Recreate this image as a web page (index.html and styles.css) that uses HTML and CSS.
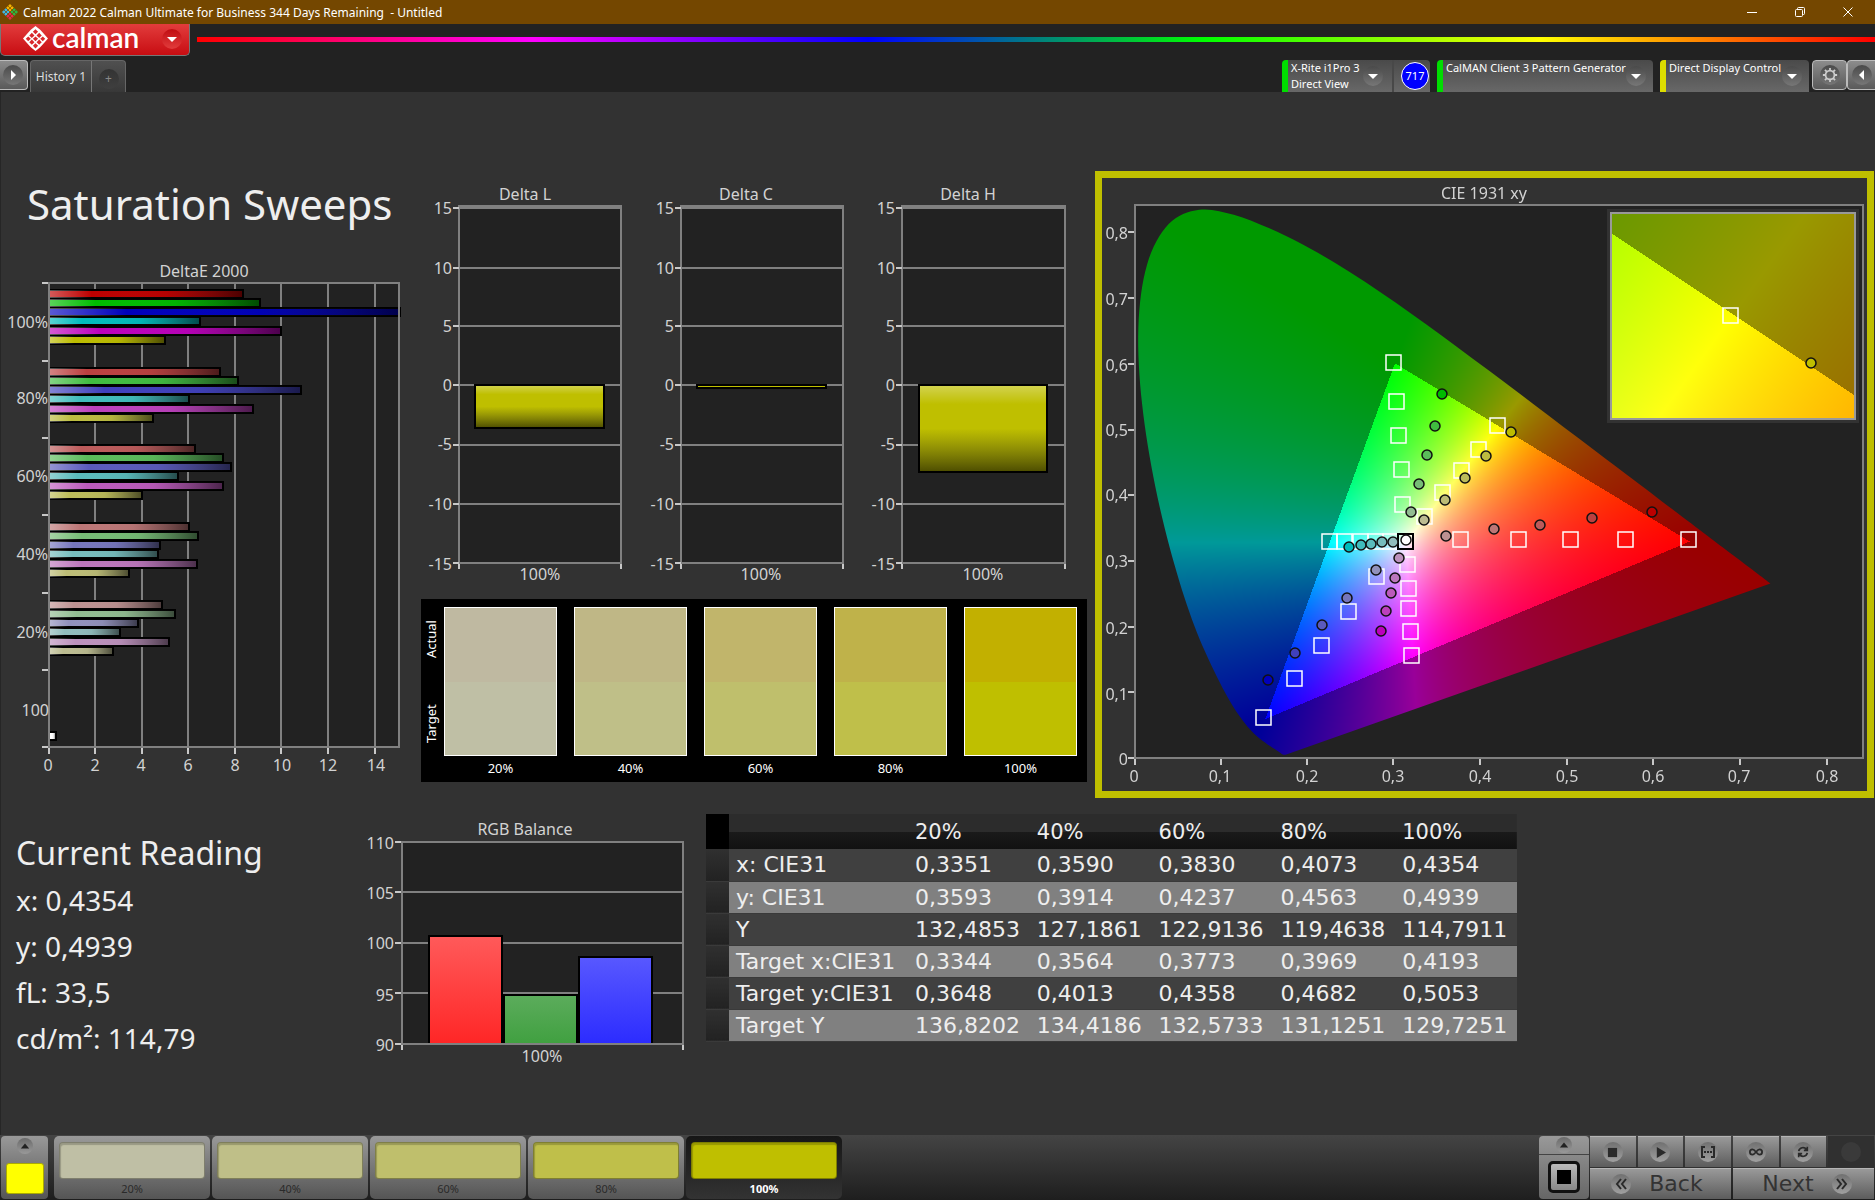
FILE: index.html
```html
<!DOCTYPE html>
<html lang="en">
<head>
<meta charset="utf-8">
<title>Calman 2022 - Untitled</title>
<link rel="stylesheet" href="styles.css">
</head>
<body>
<svg class="defs" width="0" height="0" aria-hidden="true">
  <defs>
    <linearGradient id="shadeX" x1="0" y1="0" x2="1" y2="0">
      <stop offset="0" stop-color="#fff" stop-opacity=".36"/><stop offset=".22" stop-color="#fff" stop-opacity="0"/>
      <stop offset=".6" stop-color="#222" stop-opacity="0.05"/><stop offset="1" stop-color="#000" stop-opacity=".6"/>
    </linearGradient>
    <linearGradient id="shadeY" x1="0" y1="0" x2="0" y2="1">
      <stop offset="0" stop-color="#fff" stop-opacity=".32"/><stop offset=".22" stop-color="#fff" stop-opacity="0"/>
      <stop offset=".5" stop-color="#222" stop-opacity="0"/><stop offset="1" stop-color="#000" stop-opacity=".6"/>
    </linearGradient>
    <linearGradient id="redBar" x1="0" y1="0" x2="0" y2="1"><stop offset="0" stop-color="#ff5a5a"/><stop offset="1" stop-color="#ff2626"/></linearGradient>
    <linearGradient id="greenBar" x1="0" y1="0" x2="0" y2="1"><stop offset="0" stop-color="#5cac5c"/><stop offset="1" stop-color="#40a040"/></linearGradient>
    <linearGradient id="blueBar" x1="0" y1="0" x2="0" y2="1"><stop offset="0" stop-color="#5858ff"/><stop offset="1" stop-color="#2c2cff"/></linearGradient>
  </defs>
</svg>

<header class="titlebar">
  <svg class="app-icon" viewBox="0 0 18 18"><path fill="#f4b400" d="M9 1l4 4-4 4-4-4z"/><path fill="#3fb6e8" d="M5 5l4 4-4 4-4-4z"/><path fill="#2db742" d="M13 5l4 4-4 4-4-4z"/><path fill="#e6284b" d="M9 9l4 4-4 4-4-4z"/><path d="M5 5l8 8M13 5l-8 8M7 3l8 8M3 7l8 8M11 3l-8 8M15 7l-8 8" stroke="#744700" stroke-width=".7"/></svg>
  <span class="titlebar-text">Calman 2022 Calman Ultimate for Business 344 Days Remaining &nbsp;- Untitled</span>
  <div class="window-buttons">
    <button aria-label="Minimize"><svg viewBox="0 0 12 12"><path d="M1 6.5h10"/></svg></button>
    <button aria-label="Restore"><svg viewBox="0 0 12 12"><rect x="1.5" y="3.500" width="7" height="7" rx="1"/><path d="M3.500 3V2.500q0-1 1-1h5q1 0 1 1v5q0 1-1 1H9"/></svg></button>
    <button aria-label="Close"><svg viewBox="0 0 12 12"><path d="M1.500 1.500l9 9M10.500 1.500l-9 9"/></svg></button>
  </div>
</header>

<div class="brand-row">
  <button class="brand">
    <svg class="brand-mark" viewBox="0 0 24 24"><path fill="#fff" d="M12 0l4.500 3.500L20 7.500 24 12l-4 4.500-3.500 4L12 24l-4.500-3.500L4 16.500 0 12l4-4.500 3.500-4z"/><g fill="#d8282c"><path d="M12 3l2.500 2.500L12 8 9.500 5.500z"/><path d="M8.500 6.500L11 9l-2.500 2.500L6 9z"/><path d="M15.500 6.500L18 9l-2.500 2.500L13 9z"/><path d="M5 10l2.500 2.300L5 14.600 2.700 12.300z"/><path d="M12 10l2.500 2.300L12 14.600 9.500 12.300z"/><path d="M19 10l2.300 2.300L19 14.600l-2.500-2.300z"/><path d="M8.500 13l2.500 2.500L8.500 18 6 15.500z"/><path d="M15.500 13l2.500 2.500-2.500 2.500-2.500-2.500z"/><path d="M12 16.500l2.500 2.500-2.500 2.500L9.500 19z"/></g></svg>
    <span class="brand-name">calman</span>
    <span class="round round-red"><svg viewBox="0 0 12 12"><path d="M1 4h10L6 9z"/></svg></span>
  </button>
  <div class="rainbow"></div>
</div>

<div class="tab-row">
  <button class="square-btn square-first" aria-label="Expand"><span class="round"><svg viewBox="0 0 12 12"><path d="M4 1v10l5-5z"/></svg></span></button>
  <div class="tabs">
    <button class="tab">History 1</button>
    <button class="tab tab-add" aria-label="Add tab"><span class="round round-dim">+</span></button>
  </div>
  <div class="devices">
    <button class="device meter"><span class="device-text">X-Rite i1Pro 3<br>Direct View</span><span class="round"><svg viewBox="0 0 12 12"><path d="M1 4h10L6 9z"/></svg></span><span class="count-cell"><span class="count">717</span></span></button>
    <button class="device source"><span class="device-text">CalMAN Client 3 Pattern Generator</span><span class="round"><svg viewBox="0 0 12 12"><path d="M1 4h10L6 9z"/></svg></span></button>
    <button class="device display"><span class="device-text">Direct Display Control</span><span class="round"><svg viewBox="0 0 12 12"><path d="M1 4h10L6 9z"/></svg></span></button>
    <div class="square-pair">
      <button class="square-btn" aria-label="Settings"><span class="round"><svg class="gear" viewBox="0 0 18 18"><circle cx="9" cy="9" r="5"/><path d="M9 1v3M9 14v3M1 9h3M14 9h3M3.300 3.300l2.200 2.200M12.500 12.500l2.200 2.200M3.300 14.700l2.200-2.200M12.500 5.500l2.200-2.200"/></svg></span></button>
      <button class="square-btn square-last" aria-label="Collapse"><span class="round"><svg viewBox="0 0 12 12"><path d="M8 1v10L3 6z"/></svg></span></button>
    </div>
  </div>
</div>

<main>
  <div class="row-top">
    <section class="col-left">
      <h1>Saturation Sweeps</h1>
      <svg class="chart" id="deltaE" viewBox="0 258 421 524">
        <text class="mid" x="204" y="277">DeltaE 2000</text>
        <rect class="plot" x="49" y="283" width="350" height="464"/>
        <path class="grid" d="M95 283v464M142 283v464M188 283v464M235 283v464M281 283v464M328 283v464M375 283v464"/>
        <g id="deltaEBars"></g>
        <path class="frame" d="M49 283h350v464H49z"/>
        <path class="tick" d="M42 283h6M42 361h6M42 438h6M42 515h6M42 593h6M42 670h6M42 747h6M49 748v6M95 748v6M142 748v6M188 748v6M235 748v6M281 748v6M328 748v6M375 748v6"/>
        <g class="end"><text x="48" y="328">100%</text><text x="48" y="404">80%</text><text x="48" y="482">60%</text><text x="48" y="560">40%</text><text x="48" y="638">20%</text><text x="49" y="716">100</text></g>
        <g class="mid"><text x="48" y="771">0</text><text x="95" y="771">2</text><text x="141" y="771">4</text><text x="188" y="771">6</text><text x="235" y="771">8</text><text x="282" y="771">10</text><text x="328" y="771">12</text><text x="376" y="771">14</text></g>
      </svg>
    </section>

    <section class="col-mid">
      <div class="deltas">
        <svg class="chart" viewBox="0 171 222 428">
          <text class="mid" x="104" y="200">Delta L</text>
          <rect class="plot" x="38" y="206" width="162" height="357"/>
          <path class="grid" d="M38 268h162M38 326h162M38 385h162M38 445h162M38 504h162"/>
          <path class="frame" d="M38 206h162v357H38zM38 208h162"/>
          <path class="tick" d="M32 208h6M32 268h6M32 326h6M32 385h6M32 445h6M32 504h6M32 563h6M38 564v5M200 564v5"/>
          <g class="bar"><rect x="54" y="385" width="129" height="43" fill="#bfbf00"/><rect x="54" y="385" width="129" height="43" fill="url(#shadeY)"/></g>
          <g class="end"><text x="31" y="214">15</text><text x="31" y="274">10</text><text x="31" y="332">5</text><text x="31" y="391">0</text><text x="31" y="450">-5</text><text x="31" y="510">-10</text><text x="31" y="570">-15</text></g>
          <text class="mid" x="119" y="580">100%</text>
        </svg>
        <svg class="chart" viewBox="0 171 222 428">
          <text class="mid" x="103" y="200">Delta C</text>
          <rect class="plot" x="38" y="206" width="162" height="357"/>
          <path class="grid" d="M38 268h162M38 326h162M38 385h162M38 445h162M38 504h162"/>
          <path class="frame" d="M38 206h162v357H38zM38 208h162"/>
          <path class="tick" d="M32 208h6M32 268h6M32 326h6M32 385h6M32 445h6M32 504h6M32 563h6M38 564v5M200 564v5"/>
          <g class="bar"><rect x="54" y="385" width="129" height="3" fill="#bfbf00"/></g>
          <g class="end"><text x="31" y="214">15</text><text x="31" y="274">10</text><text x="31" y="332">5</text><text x="31" y="391">0</text><text x="31" y="450">-5</text><text x="31" y="510">-10</text><text x="31" y="570">-15</text></g>
          <text class="mid" x="118" y="580">100%</text>
        </svg>
        <svg class="chart" viewBox="0 171 222 428">
          <text class="mid" x="103" y="200">Delta H</text>
          <rect class="plot" x="37" y="206" width="163" height="357"/>
          <path class="grid" d="M37 268h163M37 326h163M37 385h163M37 445h163M37 504h163"/>
          <path class="frame" d="M37 206h163v357H37zM37 208h163"/>
          <path class="tick" d="M31 208h6M31 268h6M31 326h6M31 385h6M31 445h6M31 504h6M31 563h6M37 564v5M200 564v5"/>
          <g class="bar"><rect x="54" y="385" width="128" height="87" fill="#bfbf00"/><rect x="54" y="385" width="128" height="87" fill="url(#shadeY)"/></g>
          <g class="end"><text x="30" y="214">15</text><text x="30" y="274">10</text><text x="30" y="332">5</text><text x="30" y="391">0</text><text x="30" y="450">-5</text><text x="30" y="510">-10</text><text x="30" y="570">-15</text></g>
          <text class="mid" x="118" y="580">100%</text>
        </svg>
      </div>
      <div class="swatches">
        <div class="swatch-side"><span>Actual</span><span>Target</span></div>
        <figure class="swatch s20"><div class="patch"></div><figcaption>20%</figcaption></figure>
        <figure class="swatch s40"><div class="patch"></div><figcaption>40%</figcaption></figure>
        <figure class="swatch s60"><div class="patch"></div><figcaption>60%</figcaption></figure>
        <figure class="swatch s80"><div class="patch"></div><figcaption>80%</figcaption></figure>
        <figure class="swatch s100"><div class="patch"></div><figcaption>100%</figcaption></figure>
      </div>
    </section>

    <section class="cie">
      <canvas id="gamut" width="765" height="613"></canvas>
      <svg class="chart" viewBox="1102 178 765 613">
        <text class="mid" x="1484" y="199">CIE 1931 xy</text>
        <path class="frame" d="M1135 205h728v553h-728z"/>
        <path class="tick" d="M1128 232h6M1128 298h6M1128 364h6M1128 430h6M1128 495h6M1128 561h6M1128 627h6M1128 692h6M1128 758h6M1135 759v6M1221 759v6M1307 759v6M1393 759v6M1480 759v6M1567 759v6M1653 759v6M1740 759v6M1827 759v6"/>
        <g class="end"><text x="1128" y="239">0,8</text><text x="1128" y="305">0,7</text><text x="1128" y="371">0,6</text><text x="1128" y="436">0,5</text><text x="1128" y="501">0,4</text><text x="1128" y="567">0,3</text><text x="1128" y="634">0,2</text><text x="1128" y="700">0,1</text><text x="1128" y="765">0</text></g>
        <g class="mid"><text x="1134" y="782">0</text><text x="1220" y="782">0,1</text><text x="1307" y="782">0,2</text><text x="1393" y="782">0,3</text><text x="1480" y="782">0,4</text><text x="1567" y="782">0,5</text><text x="1653" y="782">0,6</text><text x="1739" y="782">0,7</text><text x="1827" y="782">0,8</text></g>
        <g id="targets" class="targets"></g>
        <rect class="white-target" x="1398" y="534" width="15" height="15"/>
        <g id="readings" class="readings"></g>
        <rect class="inset-frame" x="1611" y="213" width="244" height="206"/>
        <rect class="target" x="1723" y="308" width="15" height="15"/>
        <circle class="reading" cx="1811" cy="363" r="5" fill="#bfbf00"/>
      </svg>
    </section>
  </div>

  <div class="row-bottom">
    <section class="reading-panel">
      <h2>Current Reading</h2>
      <p>x: 0,4354</p>
      <p>y: 0,4939</p>
      <p>fL: 33,5</p>
      <p>cd/m²: 114,79</p>
    </section>
    <svg class="chart" viewBox="360 814 346 256">
      <text class="mid" x="525" y="835">RGB Balance</text>
      <rect class="plot" x="402" y="842" width="281" height="202"/>
      <path class="grid" d="M402 892h281M402 943h281M402 993h281"/>
      <g class="bar"><rect x="429" y="936" width="73" height="108" fill="url(#redBar)"/><rect x="504" y="995" width="73" height="49" fill="url(#greenBar)"/><rect x="579" y="957" width="73" height="87" fill="url(#blueBar)"/></g>
      <path class="frame" d="M402 842h281v202H402z"/>
      <path class="tick" d="M395 842h6M395 892h6M395 943h6M395 993h6M395 1044h6M402 1045v5M683 1045v5"/>
      <g class="end"><text x="394" y="849">110</text><text x="394" y="899">105</text><text x="394" y="949">100</text><text x="394" y="1001">95</text><text x="394" y="1051">90</text></g>
      <text class="mid" x="542" y="1062">100%</text>
    </svg>
    <table>
      <colgroup><col class="c-mark"><col class="c-name"><col span="5"></colgroup>
      <thead><tr><td></td><td></td><th>20%</th><th>40%</th><th>60%</th><th>80%</th><th>100%</th></tr></thead>
      <tbody>
        <tr><td></td><th>x: CIE31</th><td>0,3351</td><td>0,3590</td><td>0,3830</td><td>0,4073</td><td>0,4354</td></tr>
        <tr><td></td><th>y: CIE31</th><td>0,3593</td><td>0,3914</td><td>0,4237</td><td>0,4563</td><td>0,4939</td></tr>
        <tr><td></td><th>Y</th><td>132,4853</td><td>127,1861</td><td>122,9136</td><td>119,4638</td><td>114,7911</td></tr>
        <tr><td></td><th>Target x:CIE31</th><td>0,3344</td><td>0,3564</td><td>0,3773</td><td>0,3969</td><td>0,4193</td></tr>
        <tr><td></td><th>Target y:CIE31</th><td>0,3648</td><td>0,4013</td><td>0,4358</td><td>0,4682</td><td>0,5053</td></tr>
        <tr><td></td><th>Target Y</th><td>136,8202</td><td>134,4186</td><td>132,5733</td><td>131,1251</td><td>129,7251</td></tr>
      </tbody>
    </table>
  </div>
</main>

<footer>
  <button class="pick" aria-label="Pattern colour"><span class="round round-small"><svg viewBox="0 0 12 12"><path d="M1 9h10L6 3z"/></svg></span><span class="pick-color"></span></button>
  <div class="steps">
    <button class="step t20"><span class="step-color"></span>20%</button>
    <button class="step t40"><span class="step-color"></span>40%</button>
    <button class="step t60"><span class="step-color"></span>60%</button>
    <button class="step t80"><span class="step-color"></span>80%</button>
    <button class="step t100 current"><span class="step-color"></span>100%</button>
  </div>
  <div class="transport">
    <button class="mode" aria-label="Window size"><span class="mode-top"><span class="round round-small"><svg viewBox="0 0 12 12"><path d="M1 9h10L6 3z"/></svg></span></span><span class="mode-box"><span class="mode-dot"></span></span></button>
    <div class="keys">
      <button aria-label="Stop"><span class="round"><svg viewBox="0 0 12 12"><path d="M1 1h10v10H1z"/></svg></span></button>
      <button aria-label="Play"><span class="round"><svg viewBox="0 0 12 12"><path d="M2 0v12l10-6z"/></svg></span></button>
      <button aria-label="Read series"><span class="round"><svg class="line" viewBox="0 0 14 12"><path d="M4 1H1v10h3M10 1h3v10h-3M3 6h2M6 6h2M9 6h2"/></svg></span></button>
      <button aria-label="Continuous"><span class="round"><svg class="line" viewBox="0 0 16 12"><path d="M8 6C6 3.500 5 3 4 3a3 3 0 0 0 0 6c1 0 2-.5 4-3s3-3 4-3a3 3 0 0 1 0 6c-1 0-2-.5-4-3z"/></svg></span></button>
      <button aria-label="Refresh"><span class="round"><svg class="line" viewBox="0 0 14 14"><path d="M2 6a5 5 0 0 1 9-2M12 8a5 5 0 0 1-9 2M12 1v4H8M2 13V9h4"/></svg></span></button>
      <button class="off" aria-label="Unused"><span class="round round-dim"></span></button>
      <button class="nav"><span class="round"><svg class="line" viewBox="0 0 12 12"><path d="M6 1L2 6l4 5M11 1L7 6l4 5"/></svg></span>Back</button>
      <button class="nav nav-next">Next<span class="round"><svg class="line" viewBox="0 0 12 12"><path d="M1 1l4 5-4 5M6 1l4 5-4 5"/></svg></span></button>
    </div>
  </div>
</footer>
<script src="charts.js"></script>
</body>
</html>
```

FILE: styles.css
```css
* { box-sizing: border-box; }

body {
  margin: 0;
  min-height: 100vh;
  display: flex;
  flex-direction: column;
  background: #323232;
  color: #eee;
  font-family: "Noto Sans", "Open Sans", sans-serif;
  font-size: 16px;
}

button {
  margin: 0;
  padding: 0;
  border: 0;
  background: none;
  color: inherit;
  font: inherit;
}

h1, h2, p, figure { margin: 0; font-weight: 400; }
.defs { position: absolute; }

/* title bar */
.titlebar {
  display: flex;
  align-items: center;
  height: 24px;
  background: #744700;
  color: #fff;
  font-size: 12px;
}
.app-icon { width: 18px; height: 18px; margin: 0 4px 0 1px; }
.window-buttons { margin-left: auto; padding-right: 3px; display: flex; }
.window-buttons button { width: 48px; height: 24px; }
.window-buttons svg { width: 12px; height: 12px; fill: none; stroke: #fff; display: block; margin: 0 auto; }

/* brand */
.brand-row { display: flex; gap: 7px; height: 36px; background: #222; }
.brand {
  display: flex;
  align-items: center;
  width: 190px;
  height: 32px;
  padding: 0 7px 2px 22px;
  border: 1px solid #777;
  border-top: 0;
  border-radius: 0 0 5px 5px;
  background: linear-gradient(#e23c3c, #c80d12);
  color: #fff;
}
.brand-mark { width: 25px; height: 25px; }
.brand-name { margin: 0 auto 4px 4px; font: 600 28px/28px Lato, sans-serif; }
.rainbow {
  flex: 1;
  height: 5px;
  margin-top: 13px;
  background: linear-gradient(90deg, #f00, #f0f, #00f, #0f0, #ff0, #f00);
}

/* round glyph holders */
.round {
  display: inline-flex;
  align-items: center;
  justify-content: center;
  flex: none;
  width: 20px;
  height: 20px;
  border-radius: 50%;
  background: linear-gradient(#4a4a4a, #777);
}
.round svg { width: 12px; height: 12px; fill: #fff; }
.round .gear { width: 16px; height: 16px; fill: none; stroke: #ccc; stroke-width: 2; }
.round-red { background: linear-gradient(#c00d12, #e23c3c); }
.round-dim { background: linear-gradient(#333, #3f3f3f); color: #888; }
.round-small { width: 16px; height: 16px; background: linear-gradient(#6a6a6a, #999); }
.round-small svg { width: 10px; height: 10px; fill: #222; }

/* tabs and devices */
.tab-row { display: flex; height: 32px; background: #222; font-size: 11px; }
.square-btn {
  width: 35px;
  height: 30px;
  border: 1px solid #bbb;
  border-radius: 4px;
  background: linear-gradient(#8c8c8c, #5a5a5a);
}
.square-first { width: 28px; border-left: 0; border-radius: 0 4px 4px 0; padding-right: 2px; }
.square-last { width: 28px; border-right: 0; border-radius: 4px 0 0 4px; }
.square-pair { display: flex; margin-left: -4px; }
.tabs { display: flex; margin-left: 2px; border: 1px solid #666; border-bottom: 0; border-radius: 4px 4px 0 0; background: linear-gradient(#505050, #383838); }
.tab { width: 60px; color: #ddd; font-size: 12px; }
.tab-add { width: 34px; border-left: 1px solid #777; padding-top: 4px; }
.devices { display: flex; gap: 7px; margin-left: auto; }
.device {
  display: flex;
  align-items: center;
  height: 32px;
  border-left: 6px solid #0d0;
  border-radius: 4px 4px 0 0;
  background: linear-gradient(#4a4a4a, #686868);
  color: #fff;
  text-align: left;
}
.device-text { align-self: flex-start; flex: 1; padding-left: 3px; line-height: 16px; white-space: nowrap; }
.meter { width: 148px; }
.source { width: 216px; padding-right: 7px; }
.display { width: 149px; padding-right: 7px; border-color: #dd0; }
.count-cell { display: flex; align-items: center; height: 32px; margin-left: 9px; padding: 0 1px 0 7px; border-left: 2px solid #484848; }
.count { width: 28px; height: 28px; border: 1px solid #fff; border-radius: 50%; background: #00f; line-height: 26px; text-align: center; }

/* charts */
.chart { display: block; width: 100%; fill: #d2d2d2; }
.chart .mid { text-anchor: middle; }
.chart .end { text-anchor: end; }
.plot { fill: #222; }
.grid, .frame, .tick { fill: none; stroke: #808080; stroke-width: 2; shape-rendering: crispEdges; }
.tick { stroke: #c8c8c8; }
.bar rect { stroke: #000; stroke-width: 2; }

main { flex: 1; padding-top: 79px; border-left: 1px solid #262626; border-right: 1px solid #262626; margin: 0 -1px 0 0; }
.row-top { display: grid; grid-template-columns: 421fr 666fr 788fr; margin-left: -1px; }
h1 { padding: 5px 0 26px 27px; font-size: 42px; line-height: 56px; white-space: nowrap; }
.deltas { display: grid; grid-template-columns: repeat(3, 1fr); }

.swatches {
  display: grid;
  grid-template-columns: 6px repeat(5, 1fr);
  gap: 17px;
  padding: 8px 10px 0 0;
  background: #000;
  color: #fff;
  font-size: 13px;
}
.swatch-side {
  display: flex;
  flex-direction: row-reverse;
  justify-content: space-between;
  align-items: center;
  width: 10px;
  height: 149px;
  margin-left: 5px;
  padding: 13px 0;
  writing-mode: vertical-rl;
  transform: rotate(180deg);
}
.swatch { text-align: center; }
.patch { height: 149px; border: 1px solid #fff; background: linear-gradient(var(--actual) 50%, var(--target) 50%); }
.swatch figcaption { line-height: 24px; padding-bottom: 2px; }
.s20 { --actual: #bfb9a1; --target: #bfbfa5; }
.s40 { --actual: #bfb786; --target: #bfbf88; }
.s60 { --actual: #c1b56b; --target: #bfbf6c; }
.s80 { --actual: #bfb24a; --target: #bfbf4a; }
.s100 { --actual: #c2b000; --target: #bfbf00; }

.cie { display: grid; margin: 0 1px 0 8px; border: 7px solid #bfbf00; }
.cie > * { grid-area: 1 / 1; width: 100%; }
.targets rect, .target { fill: none; stroke: #fff; stroke-width: 1.5; }
.white-target { fill: none; stroke: #000; stroke-width: 2; }
.readings circle, .reading { stroke: #111; stroke-width: 1.5; }
.inset-frame { fill: none; stroke: #999; stroke-width: 2; }

/* lower row */
.row-bottom { display: grid; grid-template-columns: 360fr 346fr 811fr 358fr; align-items: start; margin: 16px 0 0 -1px; }
.reading-panel { padding: 16px 0 0 16px; }
h2 { font-size: 32px; line-height: 46px; padding-bottom: 1px; }
.reading-panel p { font-size: 28px; line-height: 46px; }

table { width: 100%; table-layout: fixed; border-collapse: collapse; font: 22px/24px "DejaVu Sans", sans-serif; }
.c-mark { width: 23px; }
.c-name { width: 179px; }
td, th { padding: 1px 0 0 7px; height: 32px; text-align: left; font-weight: 400; white-space: nowrap; }
tbody tr { background: #404040; border-bottom: 1px solid #3a3a3a; }
tbody tr:nth-child(even) { background: #808080; }
tbody td:first-child { background: linear-gradient(#303030, #222); }
thead tr { background: linear-gradient(#2c2c2c 50%, #1a1a1a 50%, #111); }
thead td:first-child { background: #000; }
thead th, thead td { height: 35px; font-size: 21px; }

/* footer */
footer { display: flex; height: 65px; padding: 1px; background: linear-gradient(#444, #1e1e1e); }
.pick { display: flex; flex-direction: column; align-items: center; justify-content: space-between; width: 47px; padding: 2px 0 5px; border-radius: 4px; background: linear-gradient(#999, #555); }
.pick-color { width: 38px; height: 31px; border: 1px solid #aa0; border-radius: 3px; background: #ff0; }
.steps { display: flex; gap: 2px; margin-left: 6px; }
.step { display: flex; flex-direction: column; align-items: center; width: 156px; padding: 6px 5px 0; border-radius: 5px; background: linear-gradient(#999, #555); color: #2a2a2a; font-size: 11px; line-height: 20px; }
.step-color { width: 146px; height: 38px; border: 1px solid #00000055; border-radius: 4px; background: var(--c); box-shadow: inset 1px 2px 1px #00000033; }
.t20 { --c: #bfbfa5; }
.t40 { --c: #bfbf88; }
.t60 { --c: #bfbf6c; }
.t80 { --c: #bfbf4a; }
.t100 { --c: #bfbf00; }
.current { background: linear-gradient(#161616, #333); color: #fff; font-weight: 700; }

.transport { display: flex; margin-left: auto; gap: 1px; }
.mode { width: 50px; border-radius: 4px; background: linear-gradient(#999, #666); }
.mode-top { display: flex; justify-content: center; height: 19px; padding-top: 1px; border-bottom: 1px solid #444; }
.mode-box { display: flex; align-items: center; justify-content: center; width: 32px; height: 32px; margin: 6px auto; border: 3px solid #111; border-radius: 5px; background: linear-gradient(#bbb, #888); }
.mode-dot { width: 14px; height: 14px; background: #000; }
.keys { display: grid; width: 284px; grid-template-columns: repeat(6, 1fr); grid-auto-rows: 31px; gap: 1px 2px; font: 22px/24px "DejaVu Sans", sans-serif; color: #333; }
.keys button { display: flex; align-items: center; justify-content: center; border-top: 1px solid #b5b5b5; background: linear-gradient(#999, #5c5c5c); }
.keys .round { background: linear-gradient(#707070, #a0a0a0); }
.keys svg { fill: #2a2a2a; width: 11px; height: 11px; }
.keys .line { fill: none; stroke: #2a2a2a; stroke-width: 2; width: 14px; height: 12px; }
.keys .off { background: #303030; border-color: #303030; }
.keys .off .round { background: #3a3a3a; }
.keys .nav { grid-column: span 3; gap: 18px; padding-right: 7px; }
.keys .nav-next { padding: 0 0 0 7px; }
```

FILE: charts.js
```js
const NS = "http://www.w3.org/2000/svg";

function add(parent, name, attrs) {
  const el = document.createElementNS(NS, name);
  for (const key in attrs) el.setAttribute(key, attrs[key]);
  parent.appendChild(el);
}

// DeltaE bars: group top and the right end of each of the six bars
const bars = document.getElementById("deltaEBars");
const hues = ["100", "010", "001", "011", "101", "110"];
const groups = [
  [290, 0, [243, 260, 400, 200, 281, 165]],
  [368, 64, [220, 238, 301, 189, 253, 153]],
  [445, 90, [195, 223, 231, 178, 223, 142]],
  [523, 118, [189, 198, 160, 158, 197, 129]],
  [601, 145, [162, 175, 138, 120, 169, 113]]
];

function tint(hue, low) {
  return "rgb(" + [...hue].map(c => (c === "1" ? 188 : low)).join() + ")";
}

function bar(y, end, fill) {
  const box = { x: 49, y: y, width: end - 49, height: 8 };
  add(bars, "rect", { ...box, fill: fill, stroke: "#000", "stroke-width": 2 });
  add(bars, "rect", { ...box, fill: "url(#shadeX)" });
}

for (const [top, low, ends] of groups) {
  ends.forEach((end, i) => bar(top + Math.floor(i * 9.25), end, tint(hues[i], low)));
}
bar(732, 56, "#fff");

// CIE markers, outermost saturation first
const targets = {
  "010": [[1393, 362], [1396, 401], [1398, 435], [1401, 469], [1402, 504]],
  "110": [[1497, 425], [1478, 449], [1461, 470], [1442, 492], [1424, 516]],
  "100": [[1688, 539], [1625, 539], [1570, 539], [1518, 539], [1460, 539]],
  "011": [[1329, 541], [1344, 541], [1360, 541], [1375, 541], [1390, 541]],
  "101": [[1411, 655], [1410, 631], [1408, 608], [1408, 588], [1407, 564]],
  "001": [[1263, 717], [1294, 678], [1321, 645], [1348, 611], [1376, 576]]
};
const readings = {
  "010": [[1442, 394], [1435, 426], [1427, 455], [1419, 484], [1411, 512]],
  "110": [[1511, 432], [1486, 456], [1465, 478], [1445, 500], [1424, 520]],
  "100": [[1652, 512], [1592, 518], [1540, 525], [1494, 529], [1446, 536]],
  "011": [[1349, 547], [1361, 545], [1371, 544], [1382, 542], [1393, 542]],
  "101": [[1381, 631], [1386, 611], [1391, 593], [1395, 578], [1399, 558]],
  "001": [[1268, 680], [1295, 653], [1322, 625], [1347, 598], [1376, 570]]
};
for (const hue in targets) {
  for (const [x, y] of targets[hue]) {
    add(document.getElementById("targets"), "rect", { x: x - 7, y: y - 7, width: 15, height: 15 });
  }
  readings[hue].forEach(([x, y], i) => {
    add(document.getElementById("readings"), "circle", { cx: x, cy: y, r: 5, fill: tint(hue, groups[i][1]) });
  });
}
add(document.getElementById("readings"), "circle", { cx: 1406, cy: 540, r: 5, fill: "#fff" });

// Chromaticity fill
const locus = [
  [.1741, .005], [.1733, .0048], [.1714, .0051], [.1689, .0069], [.1644, .0109], [.1566, .0177],
  [.144, .0297], [.1355, .0399], [.1241, .0578], [.1096, .0868], [.0913, .1327], [.0687, .2007],
  [.0454, .295], [.0235, .4127], [.0082, .5384], [.0039, .6548], [.0139, .7502], [.0389, .812],
  [.0743, .8338], [.1142, .8262], [.1547, .8059], [.1929, .7816], [.2296, .7543], [.2658, .7243],
  [.3016, .6923], [.3373, .6589], [.3731, .6245], [.4087, .5896], [.4441, .5547], [.4788, .5202],
  [.5125, .4866], [.5448, .4544], [.5752, .4242], [.6029, .3965], [.627, .3725], [.6482, .3514],
  [.6658, .334], [.6801, .3197], [.6915, .3083], [.7079, .292], [.719, .2809], [.73, .27], [.7347, .2653]
];

function chroma(x, y) {
  const X = x / y, Z = (1 - x - y) / y;
  const rgb = [
    3.2406 * X - 1.5372 - 0.4986 * Z,
    -0.9689 * X + 1.8758 + 0.0415 * Z,
    0.0557 * X - 0.204 + 1.057 * Z
  ];
  const scale = (Math.min(...rgb) < -0.002 ? 153 : 255) / Math.max(...rgb);
  return rgb.map(v => Math.max(0, v) * scale);
}

function layer(w, h, toXY) {
  const c = document.createElement("canvas");
  c.width = w;
  c.height = h;
  const g = c.getContext("2d");
  const img = g.createImageData(w, h);
  for (let j = 0; j < h; j++) {
    for (let i = 0; i < w; i++) {
      const [x, y] = toXY(i, j);
      const rgb = chroma(x, Math.max(y, 0.0005));
      img.data.set([rgb[0], rgb[1], rgb[2], 255], (j * w + i) * 4);
    }
  }
  g.putImageData(img, 0, 0);
  return c;
}

const ctx = document.getElementById("gamut").getContext("2d");
ctx.fillStyle = "#222";
ctx.fillRect(33, 27, 728, 553);
ctx.save();
ctx.beginPath();
// Catmull-Rom curve through every locus sample
const pts = locus.map(([x, y]) => [33 + 865 * x, 580 - 657.5 * y]);
ctx.moveTo(...pts[0]);
for (let i = 0; i < pts.length - 1; i++) {
  const p0 = pts[Math.max(i - 1, 0)], p1 = pts[i], p2 = pts[i + 1];
  const p3 = pts[Math.min(i + 2, pts.length - 1)];
  ctx.bezierCurveTo(
    p1[0] + (p2[0] - p0[0]) / 6, p1[1] + (p2[1] - p0[1]) / 6,
    p2[0] - (p3[0] - p1[0]) / 6, p2[1] - (p3[1] - p1[1]) / 6,
    p2[0], p2[1]
  );
}
ctx.closePath();
ctx.clip();
ctx.drawImage(layer(728, 553, (i, j) => [i / 865, (553 - j) / 657.5]), 33, 27);
ctx.restore();
ctx.fillStyle = "#323232";
ctx.fillRect(505, 31, 252, 214);
ctx.drawImage(layer(245, 207, (i, j) => [.4193 + (i - 120) / 4930, .5053 - (j - 103) / 4130]), 509, 35);
```
